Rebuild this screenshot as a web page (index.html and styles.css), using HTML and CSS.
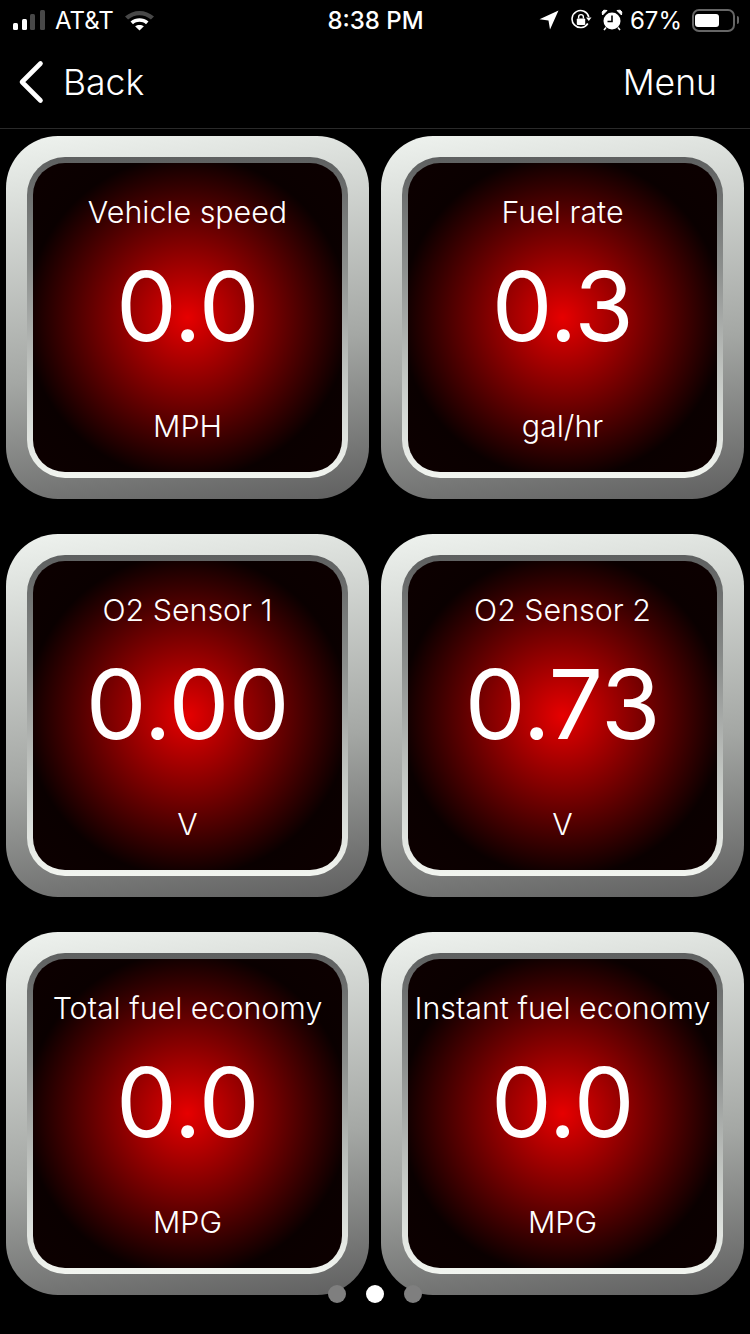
FILE: index.html
```html
<!DOCTYPE html>
<html>
<head>
  <title>Gauges</title>
  <link rel="stylesheet" href="styles.css">
</head>
<body>
  <div class="status">
    <div class="status-left">
      <svg class="signal" width="34" height="22" viewBox="0 0 34 22">
        <rect x="1" y="14" width="5" height="7" rx="1.5" fill="#fff"/>
        <rect x="10" y="10" width="5" height="11" rx="1.5" fill="#fff"/>
        <rect x="18" y="5" width="5" height="16" rx="1.5" fill="#484848"/>
        <rect x="28" y="1" width="5" height="20" rx="1.5" fill="#484848"/>
      </svg>
      <span class="carrier">AT&amp;T</span>
      <svg class="wifi" width="31" height="22" viewBox="0 0 30 22">
        <path d="M0.5 7.5C9 0 21 0 29.5 7.5L26.4 10.6C19.8 4.8 10.2 4.8 3.6 10.6Z" fill="#484848"/>
        <path d="M6 12.6C11.4 8.2 18.6 8.2 24 12.6L21.5 15.2C17.6 12 12.4 12 8.5 15.2Z" fill="#fff"/>
        <path d="M10.6 17.3C13.2 15.4 16.8 15.4 19.4 17.3L15 21.6Z" fill="#fff"/>
      </svg>
    </div>
    <div class="clock">8:38 PM</div>
    <div class="status-right">
      <svg class="icon-arrow" width="20" height="20" viewBox="0 0 20 20">
        <path d="M19.5 0.5L0.5 9.2L9.5 10.4L11 19.5Z" fill="#fff"/>
      </svg>
      <svg width="22" height="22" viewBox="0 0 22 22">
        <path d="M17.8 14.5A8.5 8.5 0 1 1 18.8 8" fill="none" stroke="#fff" stroke-width="1.6"/>
        <path d="M21.5 8.5L16 8.5L18.8 12Z" fill="#fff"/>
        <rect x="6.8" y="9.5" width="8.4" height="6.5" rx="1" fill="#fff"/>
        <path d="M8.6 9.5V8A2.4 2.4 0 0 1 13.4 8V9.5" fill="none" stroke="#fff" stroke-width="1.4"/>
      </svg>
      <svg class="icon-alarm" width="22" height="22" viewBox="0 0 22 22">
        <circle cx="11" cy="12" r="8.5" fill="#fff"/>
        <path d="M11 6.5V12.5H6.5" fill="none" stroke="#000" stroke-width="1.6"/>
        <path d="M1.5 6L6 1.5L2.8 1.2L1.2 3Z M20.5 6L16 1.5L19.2 1.2L20.8 3Z" fill="#fff" stroke="#fff"/>
        <path d="M5 18.5L3 21M17 18.5L19 21" stroke="#fff" stroke-width="1.6"/>
      </svg>
      <span class="percent">67%</span>
      <div class="battery">
        <div class="battery-fill"></div>
      </div>
      <div class="battery-cap"></div>
    </div>
  </div>

  <div class="nav">
    <div class="nav-back">
      <svg width="28" height="44" viewBox="0 0 28 44">
        <path d="M24.5 3.5L6 22L24.5 40.5" fill="none" stroke="#fff" stroke-width="4.6" stroke-linecap="round" stroke-linejoin="round"/>
      </svg>
      <span>Back</span>
    </div>
    <div class="nav-menu">Menu</div>
  </div>

  <div class="gauges">
    <div class="gauge">
      <div class="ring">
        <div class="face">
          <div class="label">Vehicle speed</div>
          <div class="value">0.0</div>
          <div class="unit">MPH</div>
        </div>
      </div>
    </div>
    <div class="gauge">
      <div class="ring">
        <div class="face">
          <div class="label">Fuel rate</div>
          <div class="value">0.3</div>
          <div class="unit">gal/hr</div>
        </div>
      </div>
    </div>
    <div class="gauge">
      <div class="ring">
        <div class="face">
          <div class="label">O2 Sensor 1</div>
          <div class="value">0.00</div>
          <div class="unit">V</div>
        </div>
      </div>
    </div>
    <div class="gauge">
      <div class="ring">
        <div class="face">
          <div class="label">O2 Sensor 2</div>
          <div class="value">0.73</div>
          <div class="unit">V</div>
        </div>
      </div>
    </div>
    <div class="gauge">
      <div class="ring">
        <div class="face">
          <div class="label">Total fuel economy</div>
          <div class="value">0.0</div>
          <div class="unit">MPG</div>
        </div>
      </div>
    </div>
    <div class="gauge">
      <div class="ring">
        <div class="face">
          <div class="label">Instant fuel economy</div>
          <div class="value">0.0</div>
          <div class="unit">MPG</div>
        </div>
      </div>
    </div>
  </div>

  <div class="dots">
    <span class="dot"></span>
    <span class="dot active"></span>
    <span class="dot"></span>
  </div>
</body>
</html>
```

FILE: styles.css
```css
html, body {
  margin: 0;
  background: #000;
}
body {
  position: relative;
  width: 750px;
  height: 1334px;
  overflow: hidden;
  font-family: Inter, "Liberation Sans", sans-serif;
  color: #fff;
}
.status {
  height: 40px;
  display: flex;
  align-items: center;
  justify-content: space-between;
  padding: 0 11px 0 12px;
  font-size: 24px;
}
.status-left, .status-right {
  width: 260px;
  display: flex;
  align-items: center;
}
.status-right {
  justify-content: flex-end;
  gap: 9px;
}
.icon-arrow {
  margin-right: 2px;
}
.icon-alarm {
  margin-right: -2px;
}
.carrier {
  margin-left: 9px;
  margin-right: 10px;
}
.clock {
  font-weight: 500;
}
.battery {
  width: 43px;
  height: 23px;
  box-sizing: border-box;
  border: 2px solid #666;
  border-radius: 7px;
  padding: 3px 1px;
  margin-left: 1px;
}
.battery-fill {
  width: 24px;
  height: 13px;
  background: #fff;
  border-radius: 3px;
}
.battery-cap {
  width: 2px;
  height: 8px;
  margin-left: -7px;
  background: #666;
  border-radius: 0 2px 2px 0;
}
.nav {
  height: 88px;
  display: flex;
  align-items: center;
  justify-content: space-between;
  padding: 0 33px 0 16px;
  border-bottom: 1px solid #2a2a2a;
  font-size: 35.5px;
  font-weight: 350;
}
.nav-back, .nav-menu {
  margin-bottom: 4px;
}
.nav-back {
  display: flex;
  align-items: center;
  gap: 19px;
}
.gauges {
  display: grid;
  grid-template-columns: 363px 363px;
  column-gap: 12px;
  row-gap: 35px;
  padding: 7px 6px;
}
.gauge {
  height: 363px;
  box-sizing: border-box;
  padding: 21px;
  border-radius: 52px;
  background: linear-gradient(172deg, #eff3ef 0%, #e0e4e0 12%, #a4a7a4 60%, #5f5f5f 100%);
}
.ring {
  height: 100%;
  box-sizing: border-box;
  padding: 6px;
  border-radius: 38px;
  background: linear-gradient(180deg, #5e6060 0%, #8d908e 35%, #d5d9d5 80%, #f2f5f0 100%);
}
.face {
  height: 100%;
  box-sizing: border-box;
  border-radius: 32px;
  overflow: hidden;
  text-align: center;
  background: radial-gradient(circle at 50% 50%, #e60000 0%, #0a0000 74%, #0d0000 100%);
}
.label, .unit {
  height: 40px;
  line-height: 40px;
  font-size: 30.4px;
  white-space: nowrap;
  font-weight: 350;
}
.label {
  margin-top: 29px;
}
.value {
  height: 110px;
  line-height: 110px;
  margin-top: 19px;
  font-size: 96.5px;
  font-weight: 375;
  letter-spacing: -0.5px;
}
.unit {
  margin-top: 45px;
}
.dots {
  position: absolute;
  left: 0;
  right: 0;
  top: 1285px;
  display: flex;
  justify-content: center;
  gap: 20px;
}
.dot {
  width: 18px;
  height: 18px;
  border-radius: 50%;
  background: #7f7f7f;
}
.dot.active {
  background: #fff;
}
```
